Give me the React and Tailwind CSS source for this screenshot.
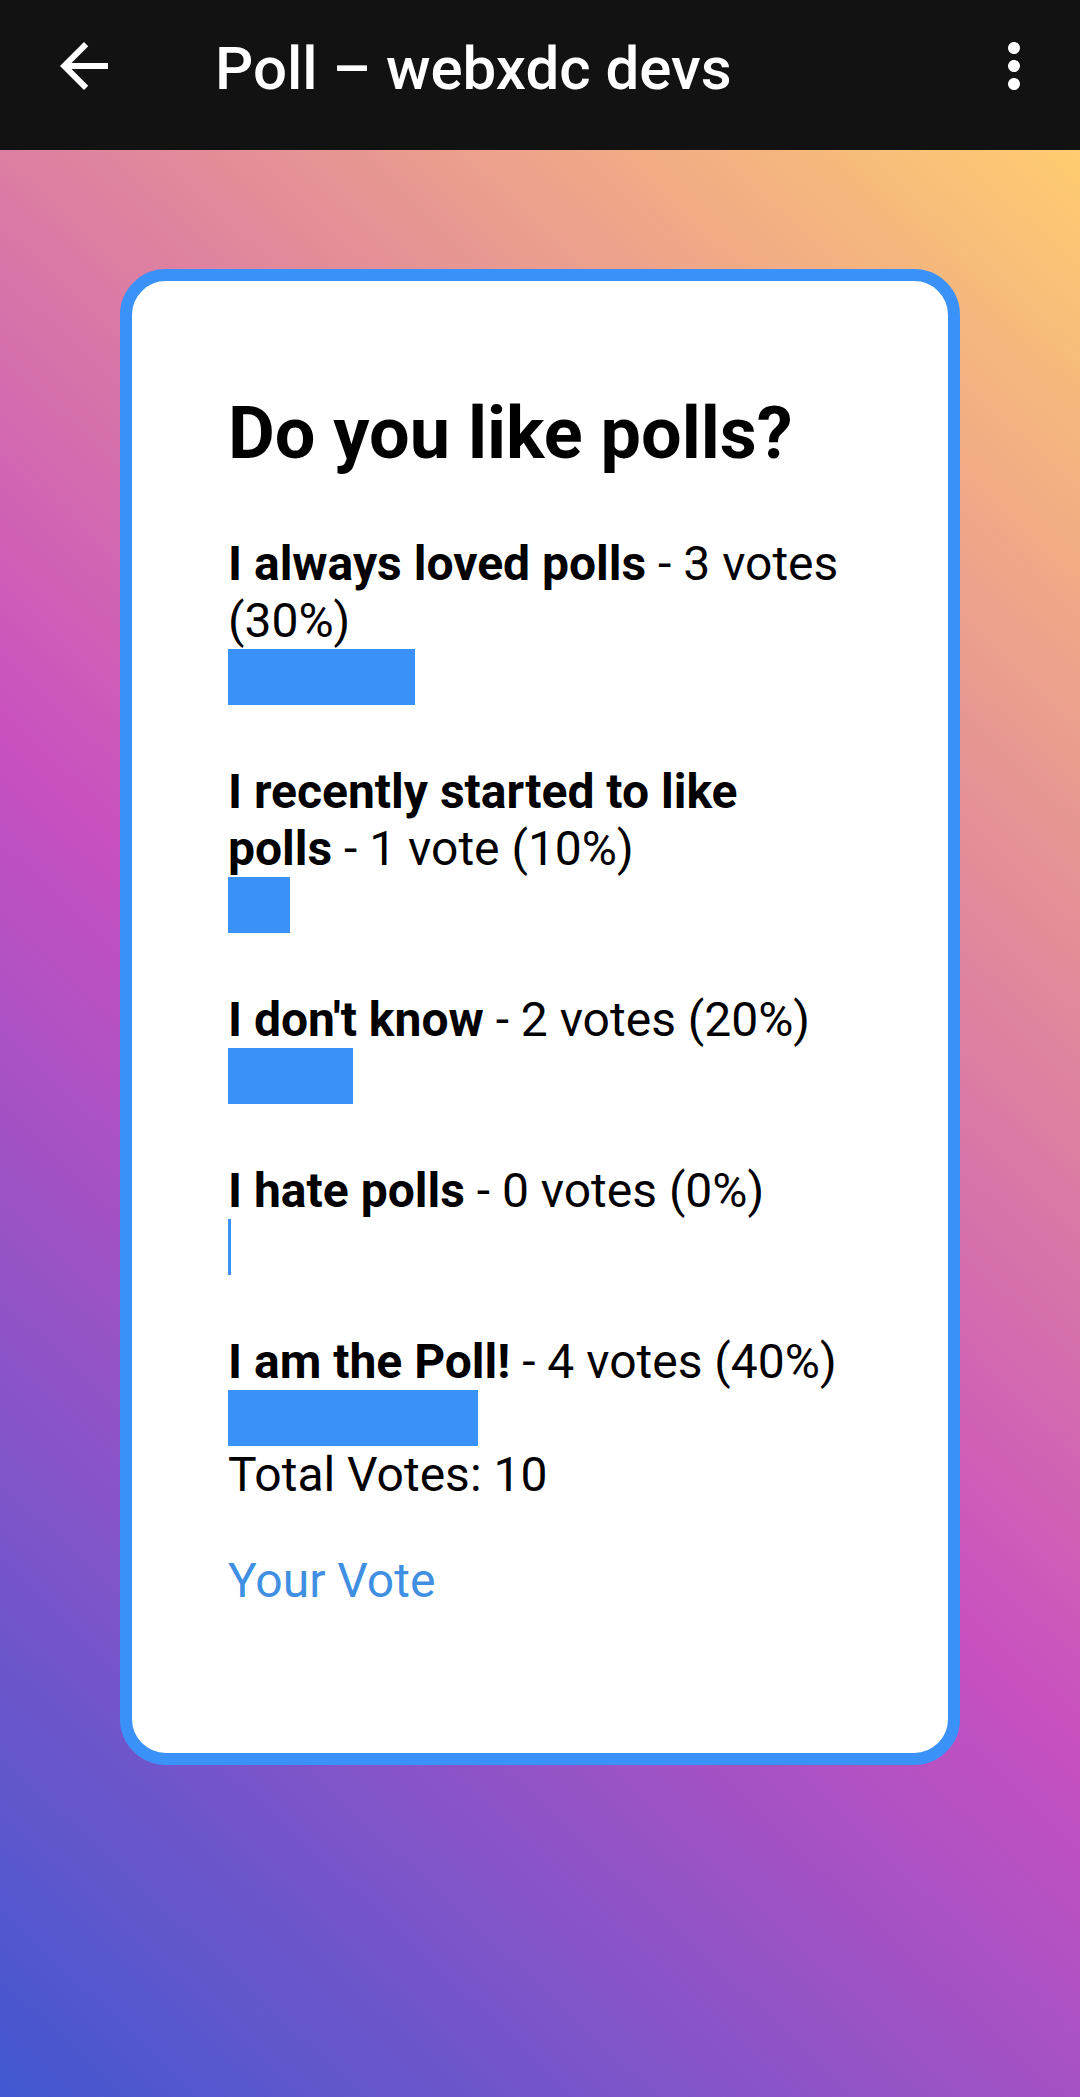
export default function App() {
  const options = [
    { label: "I always loved polls", votes: "3 votes", pct: 30 },
    { label: "I recently started to like polls", votes: "1 vote", pct: 10 },
    { label: "I don't know", votes: "2 votes", pct: 20 },
    { label: "I hate polls", votes: "0 votes", pct: 0 },
    { label: "I am the Poll!", votes: "4 votes", pct: 40 },
  ];
  return (
    <div className="w-[1080px] h-[2097px] flex flex-col font-['Roboto',sans-serif] overflow-hidden">
      <header className="h-[150px] shrink-0 bg-[#121212] flex items-start pt-[30px]">
        <svg viewBox="0 0 24 24" className="w-[72px] h-[72px] ml-[48px] shrink-0 fill-white">
          <path d="M20 11H7.83l5.59-5.59L12 4l-8 8 8 8 1.41-1.41L7.83 13H20v-2z" />
        </svg>
        <h1 className="ml-[95px] mt-[4px] text-[60px] leading-[70px] font-medium text-white whitespace-nowrap">
          Poll – webxdc devs
        </h1>
        <svg viewBox="0 0 24 24" className="w-[72px] h-[72px] ml-auto mr-[30px] shrink-0 fill-white">
          <path d="M12 8c1.1 0 2-.9 2-2s-.9-2-2-2-2 .9-2 2 .9 2 2 2zm0 2c-1.1 0-2 .9-2 2s.9 2 2 2 2-.9 2-2-.9-2-2-2zm0 6c-1.1 0-2 .9-2 2s.9 2 2 2 2-.9 2-2-.9-2-2-2z" />
        </svg>
      </header>
      <main className="flex-1 bg-[linear-gradient(43deg,#4158D0_0%,#C850C0_46%,#FFCC70_100%)] pt-[119px] px-[120px]">
        <div className="border-[12px] border-[#3a92f8] rounded-[46px] bg-white pt-[111px] pb-[144px] px-[96px] text-black">
          <h2 className="text-[72px] leading-[84px] font-bold">Do you like polls?</h2>
          <div className="mt-[59px] flex flex-col gap-[58px]">
            {options.map((o) => (
              <div key={o.label}>
                <p className="text-[48px] leading-[57px]">
                  <span className="font-bold">{o.label}</span> - {o.votes} ({o.pct}%)
                </p>
                <div
                  className="h-[56px] min-w-[3px] bg-[#3a92f8]"
                  style={{ width: `${o.pct}%` }}
                />
              </div>
            ))}
          </div>
          <p className="text-[48px] leading-[57px]">Total Votes: 10</p>
          <p className="mt-[49px] text-[48px] leading-[57px] text-[#3f8fe3]">Your Vote</p>
        </div>
      </main>
    </div>
  );
}
